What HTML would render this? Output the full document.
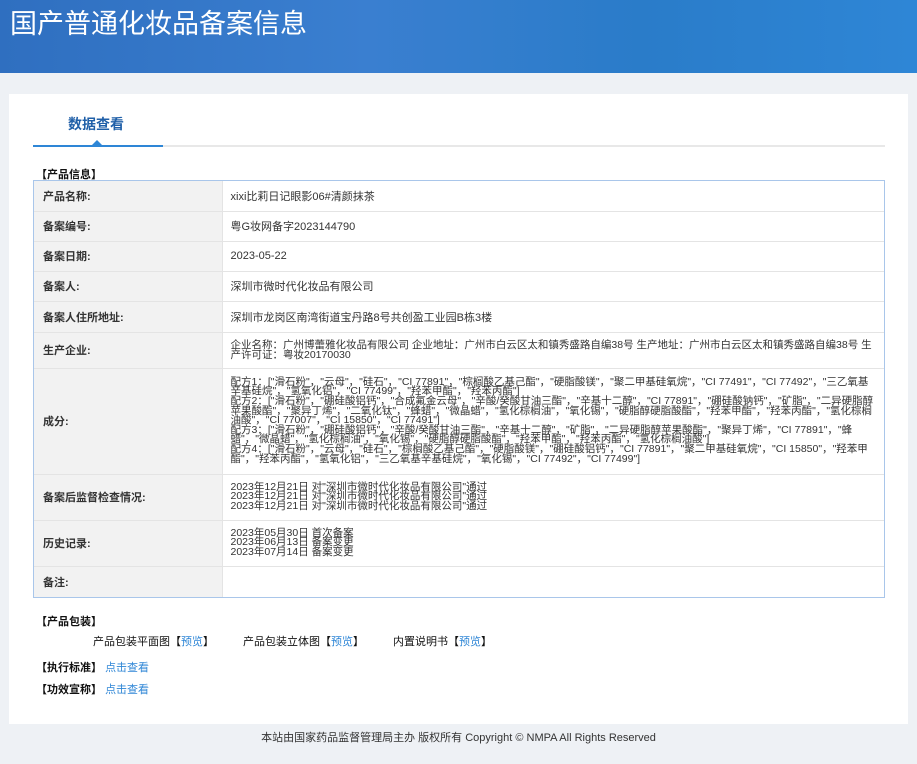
<!DOCTYPE html>
<html><head><meta charset="utf-8"><style>
*{margin:0;padding:0;box-sizing:border-box}
body{width:917px;height:764px;background:#eef1f5;font-family:"Liberation Sans","Noto Sans CJK SC",sans-serif;color:#333;position:relative;overflow:hidden}
.hd{position:absolute;left:0;top:0;width:917px;height:73px;background:linear-gradient(90deg,#2f6fc0 0%,#3a7fd0 40%,#2a7cc9 70%,#2e86d6 100%)}
.hd h1{position:absolute;left:10px;top:2px;font-size:27px;font-weight:normal;color:#fff;font-family:"Noto Sans CJK SC",sans-serif}
.panel{position:absolute;left:9px;top:94px;width:899px;height:630px;background:#fff}
.tab{position:absolute;left:68px;top:114px;font-size:14px;color:#1f5fa8;font-weight:bold}
.tl{position:absolute;left:33px;top:145px;width:852px;height:2px;background:#e8e8e8}
.tl i{position:absolute;left:0;top:0;width:130px;height:2px;background:#2e86d6}
.tri{position:absolute;left:92px;top:140px;width:0;height:0;border-left:5px solid transparent;border-right:5px solid transparent;border-bottom:5px solid #2e86d6}
.sec{position:absolute;font-size:11px;font-weight:bold;color:#111}
.tw{position:absolute;left:33px;top:180px;width:852px;border:1px solid #a9c6ea}
table{width:100%;border-collapse:collapse;font-size:11px}
td{border:1px solid #e4e4e4;padding:0 8px;vertical-align:middle;color:#333}
tr:first-child td{border-top:0}
tr:last-child td{border-bottom:0}
td:first-child{border-left:0}
td:last-child{border-right:0}
td.l{width:188px;background:#f2f2f2;font-weight:bold;padding-left:9px}
td.v{font-size:10.5px;line-height:9.6px}
.lnk{color:#2e86d6}
.foot{position:absolute;top:729px;left:0;width:917px;text-align:center;font-size:11px;color:#333}
</style></head><body>
<div class="hd"><h1>国产普通化妆品备案信息</h1></div>
<div class="panel"></div>
<div class="tab">数据查看</div>
<div class="tl"><i></i></div>
<div class="tri"></div>
<div class="sec" style="left:36px;top:166px">【产品信息】</div>
<div class="tw"><table>
<tr style="height:30px"><td class="l">产品名称:</td><td>xixi比莉日记眼影06#清颜抹茶</td></tr>
<tr style="height:30px"><td class="l">备案编号:</td><td>粤G妆网备字2023144790</td></tr>
<tr style="height:30px"><td class="l">备案日期:</td><td>2023-05-22</td></tr>
<tr style="height:30px"><td class="l">备案人:</td><td>深圳市微时代化妆品有限公司</td></tr>
<tr style="height:31px"><td class="l">备案人住所地址:</td><td>深圳市龙岗区南湾街道宝丹路8号共创盈工业园B栋3楼</td></tr>
<tr style="height:36px"><td class="l">生产企业:</td><td class="v" style="line-height:10px">企业名称：广州博蕾雅化妆品有限公司 企业地址：广州市白云区太和镇秀盛路自编38号 生产地址：广州市白云区太和镇秀盛路自编38号 生产许可证：粤妆20170030</td></tr>
<tr style="height:106px"><td class="l">成分:</td><td class="v">配方1：["滑石粉"，"云母"，"硅石"，"CI 77891"，"棕榈酸乙基己酯"，"硬脂酸镁"，"聚二甲基硅氧烷"，"CI 77491"，"CI 77492"，"三乙氧基辛基硅烷"，"氢氧化铝"，"CI 77499"，"羟苯甲酯"，"羟苯丙酯"]<br>配方2：["滑石粉"，"硼硅酸铝钙"，"合成氟金云母"，"辛酸/癸酸甘油三酯"，"辛基十二醇"，"CI 77891"，"硼硅酸钠钙"，"矿脂"，"二异硬脂醇苹果酸酯"，"聚异丁烯"，"二氧化钛"，"蜂蜡"，"微晶蜡"，"氢化棕榈油"，"氧化锡"，"硬脂醇硬脂酸酯"，"羟苯甲酯"，"羟苯丙酯"，"氢化棕榈油酸"，"CI 77007"，"CI 15850"，"CI 77491"]<br>配方3：["滑石粉"，"硼硅酸铝钙"，"辛酸/癸酸甘油三酯"，"辛基十二醇"，"矿脂"，"二异硬脂醇苹果酸酯"，"聚异丁烯"，"CI 77891"，"蜂蜡"，"微晶蜡"，"氢化棕榈油"，"氧化锡"，"硬脂醇硬脂酸酯"，"羟苯甲酯"，"羟苯丙酯"，"氢化棕榈油酸"]<br>配方4：["滑石粉"，"云母"，"硅石"，"棕榈酸乙基己酯"，"硬脂酸镁"，"硼硅酸铝钙"，"CI 77891"，"聚二甲基硅氧烷"，"CI 15850"，"羟苯甲酯"，"羟苯丙酯"，"氢氧化铝"，"三乙氧基辛基硅烷"，"氧化锡"，"CI 77492"，"CI 77499"]</td></tr>
<tr style="height:46px"><td class="l">备案后监督检查情况:</td><td class="v">2023年12月21日 对"深圳市微时代化妆品有限公司"通过<br>2023年12月21日 对"深圳市微时代化妆品有限公司"通过<br>2023年12月21日 对"深圳市微时代化妆品有限公司"通过</td></tr>
<tr style="height:46px"><td class="l">历史记录:</td><td class="v">2023年05月30日 首次备案<br>2023年06月13日 备案变更<br>2023年07月14日 备案变更</td></tr>
<tr style="height:31px"><td class="l">备注:</td><td></td></tr>
</table></div>
<div class="sec" style="left:36px;top:613px">【产品包装】</div>
<div class="sec" style="left:93px;top:633px;font-weight:normal">产品包装平面图【<span class="lnk">预览</span>】</div>
<div class="sec" style="left:243px;top:633px;font-weight:normal">产品包装立体图【<span class="lnk">预览</span>】</div>
<div class="sec" style="left:393px;top:633px;font-weight:normal">内置说明书【<span class="lnk">预览</span>】</div>
<div class="sec" style="left:36px;top:659px">【执行标准】 <span class="lnk" style="font-weight:normal">点击查看</span></div>
<div class="sec" style="left:36px;top:681px">【功效宣称】 <span class="lnk" style="font-weight:normal">点击查看</span></div>
<div class="foot">本站由国家药品监督管理局主办 版权所有 Copyright © NMPA All Rights Reserved</div>
</body></html>
